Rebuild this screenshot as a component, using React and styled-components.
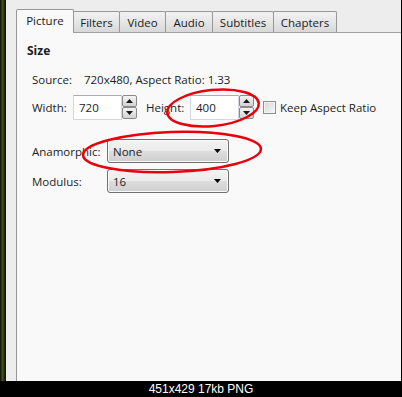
import styled, { createGlobalStyle } from "styled-components";

const GlobalStyle = createGlobalStyle`
  body {
    margin: 0;
    background: #000;
    font-family: "Open Sans", "Noto Sans", sans-serif;
  }
`;

const tabs = [
  { label: "Picture", width: 58, active: true },
  { label: "Filters", width: 47 },
  { label: "Video", width: 47 },
  { label: "Audio", width: 48 },
  { label: "Subtitles", width: 62 },
  { label: "Chapters", width: 64 },
];

export default function App() {
  return (
    <>
      <GlobalStyle />
      <Frame>
        <Window>
          <DesktopEdge />
          <Main>
            <TabBar>
              {tabs.map((t) => (
                <Tab key={t.label} $active={t.active} $width={t.width}>
                  {t.label}
                </Tab>
              ))}
            </TabBar>
            <Panel>
              <Heading>Size</Heading>
              <Section>
                <SourceRow>
                  <span>Source:</span>
                  <span>720x480, Aspect Ratio: 1.33</span>
                </SourceRow>
                <FieldRow>
                  <Label $width={41}>Width:</Label>
                  <NumberBox value="720" />
                  <Label $width={44} $left={9}>Height:</Label>
                  <NumberBox value="400" />
                  <CheckBox />
                  <CheckLabel>Keep Aspect Ratio</CheckLabel>
                </FieldRow>
                <SelectRow $top={19}>
                  <Label $width={75}>Anamorphic:</Label>
                  <Select value="None" />
                </SelectRow>
                <SelectRow $top={6}>
                  <Label $width={75}>Modulus:</Label>
                  <Select value="16" />
                </SelectRow>
              </Section>
            </Panel>
          </Main>
        </Window>
        <Caption>451x429 17kb PNG</Caption>
        <Marks viewBox="0 0 402 397">
          <ellipse cx="213" cy="108" rx="46" ry="18" transform="rotate(-6 213 108)" />
          <ellipse cx="172" cy="152" rx="89" ry="20" transform="rotate(-2 172 152)" />
        </Marks>
      </Frame>
    </>
  );
}

const NumberBox = ({ value }) => (
  <Spin>
    <Input>{value}</Input>
    <SpinButtons>
      <SpinButton>
        <svg width="7" height="4" viewBox="0 0 7 4">
          <path d="M0 4 L3.5 0 L7 4 Z" fill="#1a1a1a" />
        </svg>
      </SpinButton>
      <SpinButton>
        <svg width="7" height="4" viewBox="0 0 7 4">
          <path d="M0 0 L3.5 4 L7 0 Z" fill="#1a1a1a" />
        </svg>
      </SpinButton>
    </SpinButtons>
  </Spin>
);

const Select = ({ value }) => (
  <Dropdown>
    <span>{value}</span>
    <svg width="7" height="4" viewBox="0 0 7 4">
      <path d="M0 0 L3.5 4 L7 0 Z" fill="#000" />
    </svg>
  </Dropdown>
);

const Frame = styled.div`
  position: relative;
  width: 402px;
  height: 397px;
  display: flex;
  flex-direction: column;
  background: #000;
  overflow: hidden;
`;

const Window = styled.div`
  height: 381px;
  display: flex;
`;

const DesktopEdge = styled.div`
  width: 6px;
  background: linear-gradient(to right, #0c0f05 0%, #46521c 45%, #202610 75%, #0a0a0a 100%);
`;

const Main = styled.div`
  flex: 1;
  display: flex;
  flex-direction: column;
  background: #ededed;
  border-right: 1px solid #000;
  padding: 9px 0 0 10px;
`;

const TabBar = styled.div`
  display: flex;
  align-items: flex-end;
  height: 24px;
  position: relative;
  z-index: 1;
  margin-bottom: -1px;
`;

const Tab = styled.div`
  box-sizing: border-box;
  width: ${(p) => p.$width}px;
  height: ${(p) => (p.$active ? 24 : 21)}px;
  margin-left: -1px;
  margin-bottom: ${(p) => (p.$active ? 0 : 1)}px;
  &:first-child {
    margin-left: 0;
  }
  border: 1px solid #989898;
  border-bottom: none;
  border-radius: 2px 2px 0 0;
  background: ${(p) =>
    p.$active ? "#f9f9f9" : "linear-gradient(#f2f2f2, #e6e6e6 50%, #d8d8d8)"};
  color: #1a1a1a;
  font-size: 11.5px;
  display: flex;
  align-items: ${(p) => (p.$active ? "flex-start" : "center")};
  justify-content: center;
  padding-top: ${(p) => (p.$active ? 3 : 0)}px;
  ${(p) => p.$active && "z-index: 2;"}
`;

const Panel = styled.div`
  flex: 1;
  background: #f9f9f9;
  border-left: 1px solid #989898;
  border-top: 1px solid #a0a0a0;
  padding: 10px 0 0 10px;
  color: #1c1c24;
  font-size: 11.5px;
`;

const Heading = styled.div`
  font-weight: 700;
  font-size: 12px;
  line-height: 16px;
`;

const Section = styled.div`
  padding-left: 5px;
  margin-top: 13px;
  display: flex;
  flex-direction: column;
`;

const SourceRow = styled.div`
  display: flex;
  gap: 12px;
  line-height: 16px;
`;

const FieldRow = styled.div`
  display: flex;
  align-items: center;
  margin-top: 7px;
  height: 25px;
`;

const SelectRow = styled.div`
  display: flex;
  align-items: center;
  margin-top: ${(p) => p.$top}px;
  height: 24px;
`;

const Label = styled.span`
  width: ${(p) => p.$width}px;
  margin-left: ${(p) => p.$left || 0}px;
  white-space: nowrap;
`;

const Spin = styled.div`
  display: flex;
  align-items: flex-start;
  height: 25px;
`;

const Input = styled.div`
  box-sizing: border-box;
  width: 49px;
  height: 25px;
  background: #fff;
  border: 1px solid #d3d6dc;
  border-top-color: #abadb3;
  padding-left: 5px;
  display: flex;
  align-items: center;
`;

const SpinButtons = styled.div`
  display: flex;
  flex-direction: column;
  width: 15px;
  height: 24px;
`;

const SpinButton = styled.div`
  box-sizing: border-box;
  height: 12px;
  border: 1px solid #8a8a8a;
  border-radius: 2px;
  background: linear-gradient(#f4f4f4, #e4e4e4 50%, #d2d2d2);
  display: flex;
  align-items: center;
  justify-content: center;
`;

const CheckBox = styled.div`
  box-sizing: border-box;
  width: 13px;
  height: 13px;
  margin-left: 9px;
  border: 1px solid #8e8f8f;
  background: linear-gradient(135deg, #d8d8d8, #f6f6f6);
  box-shadow: inset 0 0 0 1px #f4f4f4;
`;

const CheckLabel = styled.span`
  margin-left: 4px;
  white-space: nowrap;
`;

const Dropdown = styled.div`
  box-sizing: border-box;
  width: 122px;
  height: 24px;
  border: 1px solid #707070;
  border-radius: 3px;
  background: linear-gradient(#f3f3f3, #ebebeb 50%, #dddddd 51%, #cfcfcf);
  box-shadow: inset 0 0 0 1px #fafafa;
  display: flex;
  align-items: center;
  justify-content: space-between;
  padding: 0 7px 0 5px;
`;

const Caption = styled.div`
  flex: 1;
  display: flex;
  align-items: center;
  justify-content: center;
  color: #fff;
  font-family: "Liberation Sans", Arial, sans-serif;
  font-size: 12px;
`;

const Marks = styled.svg`
  position: absolute;
  top: 0;
  left: 0;
  width: 402px;
  height: 397px;
  pointer-events: none;
  ellipse {
    fill: none;
    stroke: #e8000a;
    stroke-width: 2.5;
  }
`;
